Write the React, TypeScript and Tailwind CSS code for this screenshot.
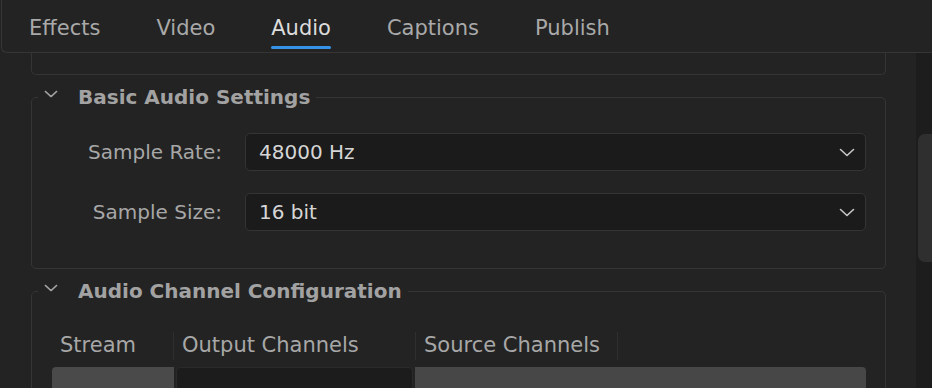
const tabs = ["Effects", "Video", "Audio", "Captions", "Publish"];

function Chevron({ className }: { className?: string }) {
  return (
    <svg viewBox="0 0 16 9" className={className} fill="none" stroke="currentColor" strokeWidth={1.6} strokeLinecap="round" strokeLinejoin="round">
      <polyline points="1.5,1.5 8,7.5 14.5,1.5" />
    </svg>
  );
}

function Dropdown({ label, value }: { label: string; value: string }) {
  return (
    <div className="flex items-center pr-[19px]">
      <div className="w-[190px] text-right text-[20px] text-[#a7a7a7]">{label}</div>
      <div className="ml-[23px] flex h-[38px] flex-1 items-center justify-between rounded-[5px] border border-[#343434] bg-[#1b1b1b] pl-[13px] pr-[10px]">
        <span className="text-[20px] text-[#d6d6d6]">{value}</span>
        <Chevron className="h-[9px] w-[16px] text-[#c8c8c8]" />
      </div>
    </div>
  );
}

function Section({ title, children }: { title: string; children: React.ReactNode }) {
  return (
    <fieldset className="ml-[31px] mt-[10px] w-[855px] rounded-[5px] border border-[#353535]">
      <legend className="ml-[6px] px-[6px]">
        <span className="flex h-[24px] items-center">
          <Chevron className="-mt-[6px] h-[8px] w-[14px] text-[#a3a3a3]" />
          <span className="ml-[20px] text-[20px] leading-[24px] font-bold text-[#a2a2a2]">{title}</span>
        </span>
      </legend>
      {children}
    </fieldset>
  );
}

export default function App() {
  return (
    <div
      className="flex h-[388px] w-[932px] flex-col overflow-hidden bg-[#232323]"
      style={{ fontFamily: '"DejaVu Sans", "Liberation Sans", sans-serif' }}
    >
      {/* Tab bar */}
      <div className="ml-px flex h-[53px] shrink-0 gap-[56px] rounded-bl-[6px] border-b border-l border-[#363636] pl-[27px] pt-[15px]">
        {tabs.map((tab) => (
          <div key={tab} className="flex flex-col">
            <span className={`text-[21px] leading-[26px] ${tab === "Audio" ? "text-[#dcdcdc]" : "text-[#a9a9a9]"}`}>{tab}</span>
            <span className={`mt-[5px] h-[3px] rounded-full ${tab === "Audio" ? "bg-[#3592e6]" : "bg-transparent"}`} />
          </div>
        ))}
      </div>

      <div className="flex flex-1">
        <div className="w-[916px] overflow-hidden">
          {/* end of the previous section */}
          <div className="ml-[31px] h-[22px] w-[855px] rounded-b-[5px] border-x border-b border-[#353535]" />

          <Section title="Basic Audio Settings">
            <div className="flex flex-col gap-[22px] pb-[37px] pt-[24px]">
              <Dropdown label="Sample Rate:" value="48000 Hz" />
              <Dropdown label="Sample Size:" value="16 bit" />
            </div>
          </Section>

          <Section title="Audio Channel Configuration">
            <div className="pl-[20px] pr-[19px] pt-[29px]">
              <div className="flex h-[28px] items-center text-[21px] text-[#a7a7a7]">
                <div className="flex h-full w-[122px] items-center border-r border-[#2f2f2f] pl-[8px]">Stream</div>
                <div className="flex h-full w-[242px] items-center border-r border-[#2f2f2f] pl-[8px]">Output Channels</div>
                <div className="flex h-full w-[202px] items-center border-r border-[#2f2f2f] pl-[8px]">Source Channels</div>
              </div>
              <div className="mt-[7px] flex h-[40px] gap-[2px] text-[20px] text-[#d0d0d0]">
                <div className="w-[122px] rounded-tl-[4px] bg-[#4a4a4a] pr-[26px] pt-[15px] text-right">1</div>
                <div className="w-[237px] rounded-t-[4px] border border-[#2a2a2a] bg-[#1c1c1c] pl-[12px] pt-[14px]">Stereo</div>
                <div className="flex-1 rounded-tr-[4px] bg-[#474747] pl-[10px] pt-[15px]">1: Stereo</div>
              </div>
            </div>
          </Section>
        </div>

        {/* Scrollbar */}
        <div className="flex-1 bg-[#1d1d1d] pl-[2px] pt-[81px]">
          <div className="h-[128px] w-full rounded-l-[7px] bg-[#2f2f2f]" />
        </div>
      </div>
    </div>
  );
}
